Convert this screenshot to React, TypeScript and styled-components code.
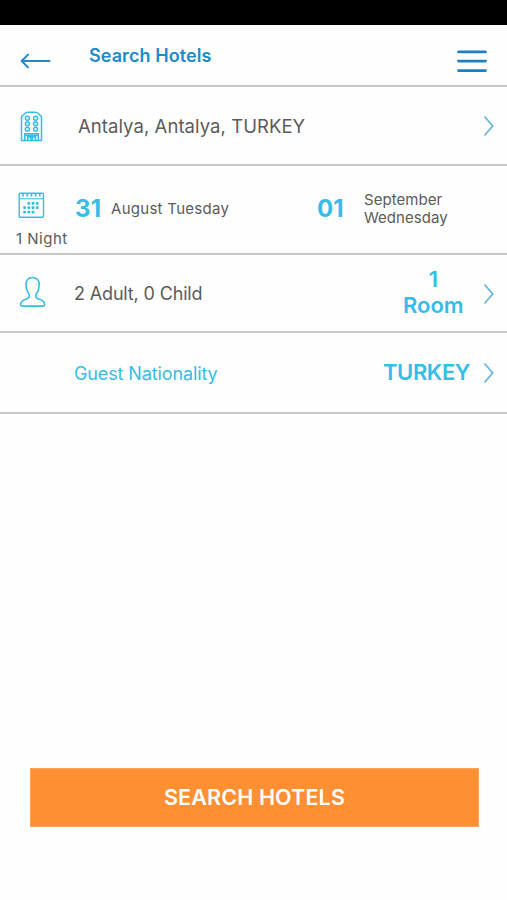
import React from 'react';
import styled, { createGlobalStyle } from 'styled-components';

const Global = createGlobalStyle`
  * { box-sizing: border-box; }
  body { margin: 0; background: #fff; }
`;

const Screen = styled.main`
  display: flex;
  flex-direction: column;
  width: 100%;
  height: 900px;
  background: #fefefe;
  font-family: Inter, 'Liberation Sans', sans-serif;
  color: #5b5b5b;
`;

const StatusBar = styled.div`
  height: 25px;
  background: #000;
`;

const Row = styled.section<{ $height: number; $columns: string }>`
  display: grid;
  grid-template-columns: ${(p) => p.$columns};
  align-items: start;
  height: ${(p) => p.$height}px;
  border-bottom: 2px solid #c9c9c9;
`;

const Slot = styled.div<{ $top: number; $left?: number }>`
  display: flex;
  padding-top: ${(p) => p.$top}px;
  padding-left: ${(p) => p.$left ?? 0}px;
`;

const Label = styled.span<{
  $size: number;
  $weight?: number;
  $color?: string;
  $track?: number;
  $line?: number;
}>`
  font-size: ${(p) => p.$size}px;
  font-weight: ${(p) => p.$weight ?? 400};
  color: ${(p) => p.$color ?? 'inherit'};
  letter-spacing: ${(p) => p.$track ?? 0}px;
  line-height: ${(p) => p.$line ?? 24}px;
  text-align: center;
  white-space: nowrap;
`;

const Stay = styled.div`
  display: flex;
  flex-direction: column;
  gap: 8px;
  padding: 26px 0 0 16px;
`;

const DateText = styled(Label)`
  text-align: left;
`;

const IconButton = styled.button`
  display: block;
  padding: 0;
  border: 0;
  background: none;
`;

const Footer = styled.footer`
  margin-top: auto;
  padding: 0 28px 73px 30px;
`;

const SearchButton = styled.button`
  display: block;
  width: 100%;
  height: 59px;
  padding: 0;
  border: 1px solid #ffa257;
  background: #ff8f33;
  color: #fff;
  font: 600 21.5px/57px Inter, sans-serif;
  letter-spacing: 0.15px;
`;

const CYAN = '#35bde9';
const BLUE = '#1d8bca';

const Chevron = () => (
  <svg width="12" height="22" viewBox="0 0 12 22" fill="none" stroke="#68b6e5" strokeWidth="1.8">
    <path d="M1.5 1.5 9.7 11 1.5 20.5" />
  </svg>
);

const BackArrow = () => (
  <svg width="31" height="16" viewBox="0 0 31 16" fill="none" stroke={BLUE} strokeWidth="2" strokeLinecap="round" strokeLinejoin="round">
    <path d="M29.5 8H2M8 1.6 1.7 8 8 14.4" />
  </svg>
);

const MenuIcon = () => (
  <svg width="30" height="24" viewBox="0 0 30 24" stroke="#1b80bf" strokeWidth="2.8" strokeLinecap="round">
    <path d="M1.5 2.8h27M1.5 12.1h27M1.5 21.6h27" />
  </svg>
);

const HotelIcon = () => (
  <svg width="24" height="32" viewBox="0 0 24 32" fill="none" stroke={CYAN} strokeWidth="1.5">
    <path d="M1.5 29.5V6.5C1.5 5 2.5 4.500 3.800 3.500S5.500 1.200 7.500 1.200h8c2 0 2.400 1.300 3.700 2.300s2.300 1.500 2.300 3V29.500Z" />
    <path d="M4.800 29.500v-6.700h13.400v6.700M4.800 24.500h13.400M7.800 29.500v-3.500h3.200V29.500M12.200 29.500v-3.500h3.200V29.500" />
    {[7.2, 12.7, 18.2].map((y) => (
      <g key={y}>
        <circle cx="7.4" cy={y} r="2" />
        <circle cx="15.6" cy={y} r="2" />
      </g>
    ))}
  </svg>
);

const dots = [
  [10.8, 11.3], [15, 11.3], [19.2, 11.3],
  [6.6, 15.7], [10.8, 15.7], [15, 15.7], [19.2, 15.7],
  [6.6, 20.1], [10.8, 20.1], [15, 20.1],
];

const CalendarIcon = () => (
  <svg width="27" height="27" viewBox="0 0 27 27" fill="none" stroke={CYAN} strokeWidth="1.4">
    <rect x="1.2" y="1.2" width="24.3" height="24" rx="1" />
    <path d="M1.5 6.8h24" strokeWidth="1" />
    <path d="M5 1.5v3M9.2 1.5v3M13.4 1.5v3M17.6 1.5v3M21.8 1.5v3" strokeWidth="1.7" />
    {dots.map(([x, y]) => (
      <rect key={`${x}-${y}`} x={x - 1.4} y={y - 1.4} width="2.8" height="2.8" rx="0.8" fill={CYAN} stroke="none" />
    ))}
  </svg>
);

const GuestIcon = () => (
  <svg width="27" height="32" viewBox="0 0 27 32" fill="none" stroke={CYAN} strokeWidth="1.6" strokeLinejoin="round">
    <path d="M13.5 1.500C9.300 1.500 6.900 4.500 7 8.700c.1 4.500 1.200 7.300 3.200 9.500v2.300c0 1.600-1.500 2.100-3.500 2.800-3.200 1-5.100 2.200-5.100 5.200 0 1 .5 1.600 1.500 1.600h21c1 0 1.500-.6 1.500-1.600 0-3-2-4.200-5.200-5.200-2-.7-3.500-1.200-3.500-2.800v-2.300c2-2.200 3.200-5 3.300-9.500.1-4.200-2.500-7.200-6.700-7.200Z" />
  </svg>
);

export default function App() {
  return (
    <Screen>
      <Global />
      <StatusBar />
      <Row as="header" $height={62} $columns="89px 368px 1fr">
        <Slot $top={28} $left={20}>
          <IconButton aria-label="Back"><BackArrow /></IconButton>
        </Slot>
        <Slot $top={19}>
          <Label $size={18} $weight={600} $color={BLUE} $track={0.07}>Search Hotels</Label>
        </Slot>
        <Slot $top={24}>
          <IconButton aria-label="Menu"><MenuIcon /></IconButton>
        </Slot>
      </Row>
      <Row $height={79} $columns="78px 405px 1fr">
        <Slot $top={24} $left={20}><HotelIcon /></Slot>
        <Slot $top={27}><Label $size={18.5} $track={0.06}>Antalya, Antalya, TURKEY</Label></Slot>
        <Slot $top={28}><Chevron /></Slot>
      </Row>
      <Row $height={89} $columns="75px 36px 206px 47px 1fr">
        <Stay>
          <Slot $top={0} $left={2}><CalendarIcon /></Slot>
          <DateText $size={15} $track={0.5}>1 Night</DateText>
        </Stay>
        <Slot $top={31}><Label $size={24} $weight={700} $color={CYAN} $track={0.2}>31</Label></Slot>
        <Slot $top={31}><Label $size={15} $track={0.28}>August Tuesday</Label></Slot>
        <Slot $top={31}><Label $size={24} $weight={700} $color={CYAN}>01</Label></Slot>
        <Slot $top={25}>
          <DateText $size={15} $line={18} $track={0.05}>September<br />Wednesday</DateText>
        </Slot>
      </Row>
      <Row $height={78} $columns="74px 329px 80px 1fr">
        <Slot $top={21} $left={19}><GuestIcon /></Slot>
        <Slot $top={27}><Label $size={18} $track={-0.15}>2 Adult, 0 Child</Label></Slot>
        <Slot $top={11}>
          <Label $size={22} $weight={600} $color={CYAN} $line={26}>1<br />Room</Label>
        </Slot>
        <Slot $top={28}><Chevron /></Slot>
      </Row>
      <Row $height={81} $columns="74px 309px 100px 1fr">
        <span />
        <Slot $top={29}><Label $size={18} $color={CYAN} $track={-0.12}>Guest Nationality</Label></Slot>
        <Slot $top={27}><Label $size={22} $weight={600} $color={CYAN} $track={-0.4}>TURKEY</Label></Slot>
        <Slot $top={29}><Chevron /></Slot>
      </Row>
      <Footer>
        <SearchButton>SEARCH HOTELS</SearchButton>
      </Footer>
    </Screen>
  );
}
